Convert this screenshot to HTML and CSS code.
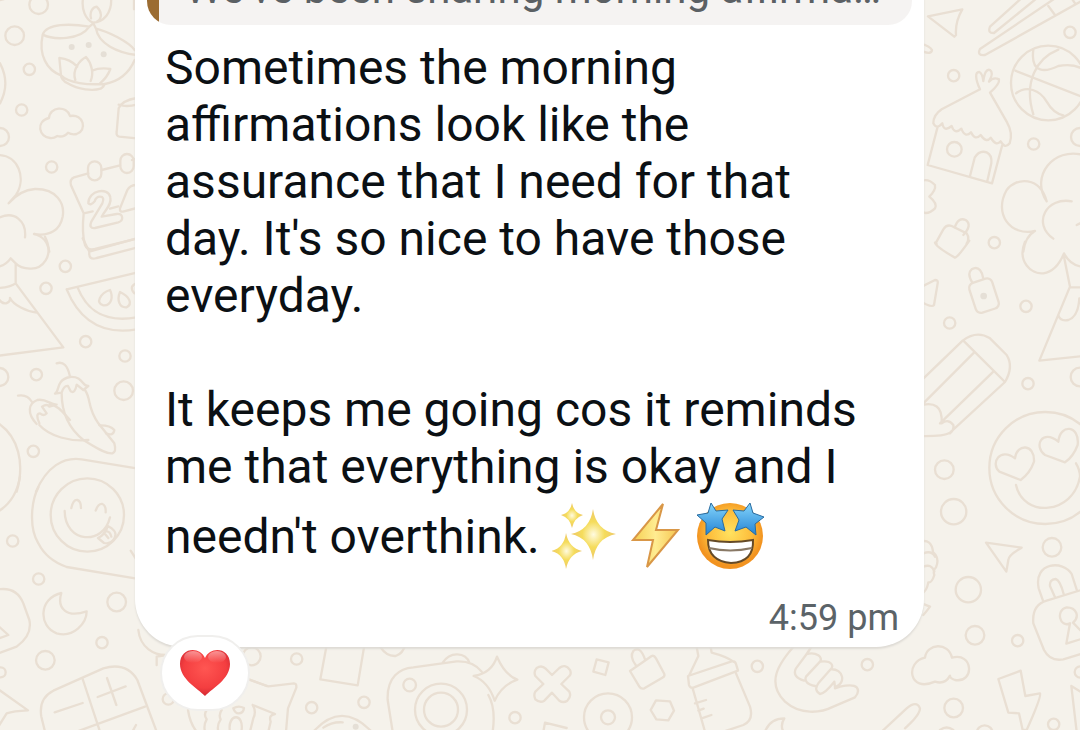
FILE: index.html
```html
<!DOCTYPE html>
<html lang="en">
<head>
<meta charset="utf-8">
<meta name="viewport" content="width=device-width, initial-scale=1">
<title>Chat</title>
<link rel="stylesheet" href="styles.css">
</head>
<body>
<main class="chat">
<svg class="wallpaper" viewBox="0 0 1080 730" preserveAspectRatio="xMidYMin slice" aria-hidden="true">
  <g transform="scale(.33333)">
    <circle cx="116" cy="14" r="28"/><circle cx="44" cy="107" r="28"/><circle cx="88" cy="208" r="17"/><circle cx="65" cy="330" r="17"/><circle cx="155" cy="501" r="17"/><circle cx="0" cy="411" r="27"/>
    <path d="M0 190Q32 250 0 310M-10 3L12-3M402-5V28"/>
    <path d="M250-10C242 30 258 58 278 68C310 66 338 40 333-10M273 55C268 35 278 22 290 20C306 35 307 55 292 64"/>
    <path d="M128 104C140 70 210 70 268 80L280 70L288 86C325 95 385 125 404 150M128 104C160 120 240 122 268 80M288 86C295 130 350 158 410 165M128 104C115 165 140 210 183 226M404 180C385 225 350 245 315 252"/>
    <path d="M183 226L178 174C200 176 218 185 232 200M226 240C215 210 240 180 258 171C275 190 282 220 272 243M276 212Q300 202 331 207Q322 232 300 250M183 226C205 250 265 255 313 252M183 226Q184 240 203 250C235 270 280 273 302 266Q312 260 313 252"/>
    <path d="M150 414C118 412 105 365 147 354C149 320 200 315 210 348C252 340 262 392 230 402Q215 405 204 398Q190 414 172 408Q160 416 150 414Z"/>
    <path d="M410 415L358 410Q348 408 350 396L356 325C365 305 385 298 410 294M356 314Q380 322 410 314"/>
    <path d="M-5 465C55 465 80 535 48 585L26 610Q60 570 105 567C170 566 195 610 188 650C180 690 150 710 102 702C130 708 142 725 148 755M-5 654C45 630 80 665 75 712"/>
    <path d="M265 520L222 532Q208 538 213 556L251 640Q245 700 255 735Q262 752 285 747L410 716M251 640L278 634M305 510L360 496M330 626L355 619M396 480L410 475"/>
    <rect x="264" y="484" width="40" height="57" rx="20"/><rect x="361" y="462" width="40" height="57" rx="20"/>
    <path d="M265 610C265 570 325 560 331 592C336 615 315 630 305 650L350 642C370 640 372 662 355 667L285 684Q265 686 274 665L307 610Q315 590 300 590Q288 590 284 604Q272 618 265 610ZM410 555Q390 555 382 570L360 625Q358 638 372 634L410 624"/>
    <g class="dots"><circle cx="215" cy="141" r="9"/><circle cx="266" cy="135" r="9"/><circle cx="311" cy="163" r="9"/></g>
  </g>
  <g transform="translate(0 240) scale(.33333)">
    <circle cx="196" cy="79" r="17"/><circle cx="138" cy="145" r="17"/><circle cx="257" cy="305" r="17"/><circle cx="375" cy="348" r="17"/><circle cx="109" cy="404" r="17"/><circle cx="100" cy="634" r="17"/><circle cx="371" cy="452" r="28"/><circle cx="-2" cy="411" r="27"/>
    <path d="M135-10C165 50 125 88 90 86Q60 84 47 70L32 55Q18 75-5 80M47 70V130L190 322L-5 347M47 130Q30 142-5 144M-5 175Q5 192 18 190Q32 185 30 174C40 195 80 215 110 218"/>
    <path d="M248-5L268 35L410-5M268 35Q265 62 290 54L410 23M200 148L410 98M200 148C240 245 310 285 410 268M233 143C260 210 310 250 410 232"/>
    <path d="M330 150C300 160 285 190 310 196C335 198 340 170 330 150ZM360 156C350 180 358 204 380 202C398 192 390 170 360 156ZM410 130Q385 138 403 160"/>
    <path d="M170 370Q200 360 210 410M165 461C180 455 165 420 210 411C250 408 245 440 265 438L250 450L230 434Q225 462 212 454L204 438Q192 436 185 458M185 460C185 510 200 560 250 600C285 620 315 642 337 640Q350 635 343 610L295 550C260 500 275 480 255 450M165 461L185 458"/>
    <path d="M54 467Q82 462 96 486M110 552C80 520 85 490 112 480C140 475 150 495 170 494L148 500Q142 490 126 500L140 520Q132 530 120 520Q105 520 118 550M150 492C180 500 190 520 210 540M118 555C150 590 210 605 265 600M298 556Q330 555 343 570Q340 590 318 580"/>
    <path d="M-5 550C55 590 75 670 50 755M108 755C140 680 190 650 245 658L410 685"/>
  </g>
  <g transform="translate(0 480) scale(.33333)">
    <circle cx="262" cy="105" r="110"/><circle cx="38" cy="183" r="17"/><circle cx="116" cy="297" r="17"/><circle cx="306" cy="488" r="17"/><circle cx="350" cy="366" r="28"/><circle cx="136" cy="541" r="28"/><circle cx="2" cy="577" r="15"/><circle cx="505" cy="657" r="17"/><circle cx="755" cy="529" r="27"/>
    <path d="M60-10Q48 62-5 94M115 22C95 60 85 140 115 190Q140 240 200 261L410 296M214 84Q220 58 232 60Q243 63 243 84M287 92Q295 70 307 72Q318 76 317 97M194 93C195 190 310 198 330 112M294 174Q318 162 323 138M294 174L312 189Q330 194 340 180Q355 160 335 145L323 138M312 158L325 174M320 154Q330 154 334 170"/>
    <path d="M-5 328Q50 320 70 370L88 420Q98 465 50 500L-5 520M-5 438L25 465L-5 476M184 339C115 355 115 440 170 460C220 475 260 430 260 394C200 415 170 385 184 339ZM392 212L410 240M-5 628L84 691Q40 693 20 700L-5 740"/>
    <path d="M135 755L124 710Q115 655 160 632L310 565Q380 545 412 600L470 755M247 594L300 755M230 755L435 680M164 697L248 669M321 594L349 675M293 651L377 619M397 755L408 735"/>
    <path d="M415 450C420 500 460 530 510 524M470 555V530L490 527M564 690Q570 730 590 755M620 690Q610 705 620 718Q610 735 615 755M665 690Q655 705 662 718Q650 735 655 755M700 685Q715 675 732 684Q730 700 716 700Q705 700 700 685M690 755C680 700 735 695 724 755M745 597L800 618"/>
  </g>
  <g transform="translate(920) scale(.33333)">
    <circle cx="450" cy="97" r="17"/><circle cx="101" cy="227" r="17"/><circle cx="341" cy="432" r="17"/><circle cx="223" cy="728" r="17"/><circle cx="480" cy="411" r="27"/><circle cx="385" cy="249" r="112"/><circle cx="103" cy="448" r="22"/>
    <path d="M24 49L127 28Q105 65 108 105L103 110ZM304-5L210 80Q202 100 222 99L350-5M405-5L180 147Q170 168 195 165L485 3M385 18L405 45M455-5L465 10M0 130Q30 138 36 150Q34 164 10 155"/>
    <path d="M286 212L490 292M415 149C350 175 310 245 340 343M340 149C330 225 380 215 415 198Q460 190 488 207M288 280C320 255 360 270 380 305Q400 340 430 346"/>
    <path d="M180 268L65 328Q40 345 40 370Q50 390 67 370Q72 398 95 378Q104 405 124 386Q135 415 153 397Q165 423 182 405Q198 430 212 413Q228 440 242 424Q255 448 269 430Q280 400 260 365L210 278M180 268C165 235 165 215 178 216Q187 220 190 243Q195 205 210 210Q222 218 207 245Q220 230 237 238Q240 252 210 278M53 380L23 495L216 550L246 438M150 528L164 473Q178 450 200 457Q217 465 214 490L202 543"/>
    <path d="M-5 548Q20 530 45 555Q48 570 28 590Q53 610 45 625Q20 650-5 630M50 732L48 728L70 688Q80 672 95 678L140 700Q150 715 140 730M104 683Q115 650 137 660Q158 675 130 705"/>
    <path d="M490 465C400 440 330 530 380 604C360 530 290 530 260 570C220 640 270 710 345 693Q315 710 310 755M455 604C380 590 335 670 400 716M490 665L470 675"/>
  </g>
  <g transform="translate(920 240) scale(.33333)">
    <circle cx="318" cy="199" r="17"/><circle cx="89" cy="249" r="17"/><circle cx="324" cy="431" r="17"/><circle cx="480" cy="411" r="28"/><circle cx="73" cy="689" r="28"/><circle cx="376" cy="684" r="168"/>
    <path d="M45 8Q48 20 105 53Q115 50 148 2M-5 145L45 120Q55 120 53 130L42 195Q35 205-5 180M157 128Q140 100 155 88C178 74 188 100 190 116"/>
    <rect x="156" y="120" width="72" height="94" rx="16" transform="rotate(-18 192 167)"/>
    <path d="M315 5C290 65 335 104 370 100Q410 94 432 40Q450 75 485 80M432 50L450 140L358 362L490 348M450 142H490M415 225Q420 245 445 240Q475 230 478 175"/>
    <path d="M-5 430L128 302Q170 270 210 295L260 345Q282 380 255 426L90 578Q70 590-5 588M130 302L255 426M162 338L-5 505M220 395L60 550M-5 498Q70 475 65 550Q85 535 100 555Q103 570 90 580"/>
    <path d="M302 720L238 695C210 670 240 620 285 655C290 610 345 610 342 665Q330 700 302 720ZM435 667L375 645C340 620 365 565 415 605C420 550 480 555 473 615Q460 650 435 667ZM288 735C310 835 460 825 480 710Q480 690 468 670"/>
    <g class="dots"><circle cx="191" cy="168" r="10"/></g>
  </g>
  <g transform="translate(900 480) scale(.33333)">
    <circle cx="161" cy="95" r="38"/><circle cx="205" cy="329" r="38"/><circle cx="456" cy="202" r="28"/><circle cx="225" cy="466" r="28"/><circle cx="353" cy="482" r="17"/><circle cx="161" cy="684" r="28"/><circle cx="461" cy="733" r="17"/><circle cx="541" cy="576" r="17"/><circle cx="254" cy="760" r="24"/>
    <path d="M258 188L365 203Q325 225 325 240L319 275ZM60 185Q95 175 99 216Q120 235 108 262Q98 270 103 285Q95 310 85 307Q80 335 65 340M70 220Q95 210 105 230M70 260Q95 250 103 275M65 370L90 380Q75 400 70 405"/>
    <path d="M430 365L416 325C400 245 490 240 515 282L531 332M465 352L450 318Q448 298 467 297Q480 300 491 342M550 328L440 362Q395 375 400 430L432 510Q450 545 490 538L550 520M510 430C480 445 465 390 500 382C530 382 540 410 519 428L545 455M510 430L499 491L550 475"/>
    <path d="M105 605C25 640 15 545 75 533C80 490 145 485 156 533C220 515 225 610 165 600Q150 595 150 587Q135 615 105 605ZM295 597L362 572L376 648L420 640Q425 650 380 750H368L357 700L325 698ZM514 618L530 755M514 618L550 640M120 750Q140 735 160 750"/>
  </g>
  <g transform="translate(250 640) scale(.33333)">
    <circle cx="140" cy="57" r="17"/><circle cx="185" cy="203" r="17"/><circle cx="342" cy="187" r="17"/><circle cx="479" cy="135" r="19"/><circle cx="795" cy="233" r="17"/><circle cx="573" cy="209" r="78"/><circle cx="573" cy="209" r="51"/>
    <path d="M0 120L55 139L132 130Q140 130 139 143L114 205L108 275M8 195L75 222Q55 225 62 245L55 275M8 195Q20 215 10 235L0 275M231 10L211 118L323 136L344 10M390 20Q410 50 437 48Q460 40 465 15M190 275Q275 180 365 275M220 263Q245 245 278 247"/>
    <path d="M428 275L413 180C410 110 450 85 490 82L620 64Q670 62 695 95M578 68Q595 42 622 43Q650 44 658 68M715 165Q738 205 728 275M741 50Q765 105 802 119Q755 135 734 182Q715 125 671 108Q725 100 741 50ZM906 105L928 84Q945 70 960 90Q965 102 958 108L934 132L958 155Q965 170 952 182Q940 190 928 182L906 158L883 182Q870 190 856 178Q850 165 856 155L880 132L856 108Q850 95 860 84Q875 74 887 86ZM880 275L885 248L950 264"/>
    <g class="dots"><circle cx="317" cy="260" r="9"/></g>
  </g>
  <g transform="translate(590 640) scale(.33333)">
    <circle cx="502" cy="79" r="17"/><circle cx="832" cy="74" r="17"/><circle cx="54" cy="232" r="21"/><circle cx="54" cy="232" r="72"/>
    <path d="M20 58L56 67L46 105L10 95ZM120 93L185 48Q192 45 198 55L223 102Q225 110 217 113L163 145Q153 148 148 140ZM137 75Q118 50 130 33Q150 15 165 58M198 181L240 184L252 212L235 241L199 238L182 210Z"/>
    <path d="M318 10L325 48L298 105M360 10L365 38Q410 50 430 65M294 108L425 64Q435 62 438 72L444 92L310 143Q300 145 297 135ZM308 145L345 275M438 100L480 200Q492 240 460 255L400 275M315 190L348 180M325 212L341 206M335 235L364 225"/>
    <path d="M620 10C560 75 530 130 585 185C630 225 690 220 730 200L795 172Q810 155 800 142Q790 132 750 140L735 145M668 15L650 42M650 42C680 35 700 52 690 65C730 60 730 80 722 88C760 85 770 130 735 142L733 125M650 42L618 85Q605 110 642 122M690 65L648 110Q640 130 675 138M722 88L685 130Q670 150 690 162Q705 160 733 125M525 275Q540 235 583 235Q570 255 580 275M875 275L950 205Q980 180 990 205Q990 225 945 265"/>
  </g>
</svg>
<article class="bubble">
  <blockquote class="quote">We've been sharing morning affirma…</blockquote>
  <div class="message">
    <p>Sometimes the morning<br>affirmations look like the<br>assurance that I need for that<br>day. It's so nice to have those<br>everyday.</p>
    <p>It keeps me going cos it reminds<br>me that everything is okay and I<br>needn't overthink. <svg class="emoji" viewBox="0 0 72 80" role="img" aria-label="Sparkles">
      <defs><radialGradient id="gold"><stop offset="0" stop-color="#fffbe0"/><stop offset=".5" stop-color="#f5dc5b"/><stop offset="1" stop-color="#edc76a"/></radialGradient></defs>
      <g fill="url(#gold)"><path d="M41 14Q44 35 64 39Q44 43 41 65Q38 43 19 39Q38 35 41 14Z"/><path d="M20 8Q22 18 31 20Q22 23 20 33Q18 23 9 20Q18 18 20 8Z"/><path d="M14 38Q17 53 30 56Q17 59 14 74Q12 59-1 56Q12 53 14 38Z"/></g></svg><svg class="emoji" viewBox="0 0 72 80" role="img" aria-label="Lightning">
      <defs><linearGradient id="bolt"><stop stop-color="#f5cf52"/><stop offset=".5" stop-color="#ffec91"/><stop offset="1" stop-color="#f5c54f"/></linearGradient></defs>
      <path d="M39 9L9 45H29L23 72L54 35H32Z" fill="url(#bolt)" stroke="#d99747" stroke-width="2"/></svg><svg class="emoji" viewBox="0 0 72 80" role="img" aria-label="Star-struck">
      <defs><radialGradient id="face" cy=".45"><stop stop-color="#ffe260"/><stop offset=".65" stop-color="#fdbd3b"/><stop offset="1" stop-color="#f29320"/></radialGradient><linearGradient id="star" x2="0" y2="1"><stop stop-color="#85d5fb"/><stop offset="1" stop-color="#2484d5"/></linearGradient></defs>
      <circle cx="34" cy="41" r="33" fill="url(#face)"/><path d="M12 45Q34 49 57 45Q58 67 35 68Q12 66 12 45Z" fill="#fff" stroke="#654a27" stroke-width="2"/><path d="M13 53Q34 58 56 53" fill="none" stroke="#897966" stroke-width="2"/>
      <g fill="url(#star)" stroke="#286ba0" stroke-width="1" stroke-linejoin="round"><path d="M15 8L20 16L32 15L26 24L29 36L19 32L10 40L10 28L1 20L12 18Z"/><path d="M54 8L57 18L68 22L59 29L60 40L50 32L39 36L43 25L37 15L48 16Z"/></g></svg></p>
  </div>
  <footer class="meta"><time datetime="16:59">4:59 pm</time></footer>
  <button class="reaction" type="button" aria-label="Red heart reaction">
    <svg viewBox="0 0 52 48" aria-hidden="true"><defs><radialGradient id="heart" cx=".5" cy=".4" r=".65"><stop stop-color="#ff5652"/><stop offset=".65" stop-color="#f43e40"/><stop offset="1" stop-color="#c9232e"/></radialGradient><linearGradient id="shine" x2="0" y2="1"><stop stop-color="#fff" stop-opacity=".45"/><stop offset="1" stop-color="#fff" stop-opacity="0"/></linearGradient></defs><path d="M26 47C18 39 1 30 1 15C1-2 21-3 26 9C31-3 51-2 51 15C51 30 34 39 26 47Z" fill="url(#heart)"/><ellipse cx="14" cy="8" rx="9" ry="6" fill="url(#shine)"/><ellipse cx="38" cy="8" rx="9" ry="6" fill="url(#shine)"/></svg>
  </button>
</article>
</main>
</body>
</html>
```
FILE: styles.css
```css
* { box-sizing: border-box; }
body { margin: 0; background: #f5f2eb; font-family: Roboto, sans-serif; }
.chat {
  position: relative;
  min-height: 100vh;
  padding: 0 156px 80px 135px;
  overflow: hidden;
}
.wallpaper {
  position: absolute;
  inset: 0;
  width: 100%;
  height: 100%;
  fill: none;
  stroke: #e9dfd3;
  stroke-width: 7;
  stroke-linecap: round;
  stroke-linejoin: round;
}
.dots { fill: #e5dfd6; stroke: none; }
.bubble {
  position: relative;
  margin-top: -48px;
  padding: 12px;
  background: #fff;
  border-radius: 48px;
  box-shadow: 0 2px 2px #dedbd5;
}
.quote {
  margin: 0;
  padding: 0 24px 12px 38px;
  border-radius: 24px;
  background: linear-gradient(to right, #9b6c32 12px, #f5f3f2 12px);
  color: #5b6064;
  font-size: 42px;
  line-height: 49px;
  white-space: nowrap;
  overflow: hidden;
}
.message {
  padding: 14px 18px 0;
  color: #0b1014;
  font-size: 48px;
  line-height: 57px;
}
.message p { margin: 0 0 57px; }
.message p:last-child { margin: 0; }
.emoji { width: 72px; height: 80px; vertical-align: -22px; }
.meta {
  padding: 22px 13px 0;
  color: #5b6368;
  font-size: 36px;
  line-height: 42px;
  text-align: right;
}
.message + .meta { margin-bottom: -4px; }
.reaction {
  position: absolute;
  left: 25px;
  bottom: -64px;
  display: flex;
  align-items: center;
  justify-content: center;
  width: 90px;
  height: 76px;
  padding: 0;
  border: 2px solid #f0efed;
  border-radius: 38px;
  background: #fff;
}
.reaction svg { width: 52px; height: 48px; }
```
